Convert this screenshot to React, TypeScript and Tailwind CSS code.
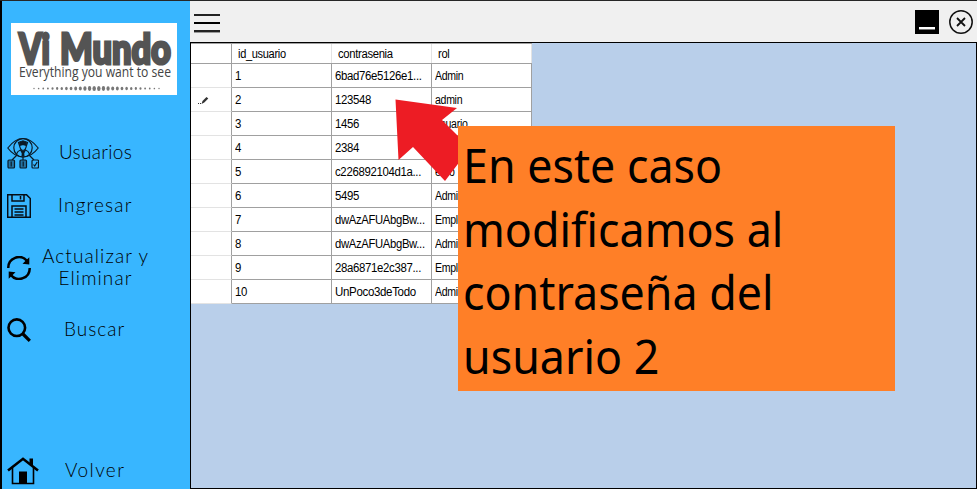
import React from "react";

const rows = [
  { id: "1", pass: "6bad76e5126e1...", rol: "Admin", t: "scale-x-[0.95]" },
  { id: "2", pass: "123548", rol: "admin", t: "scale-x-[0.95]" },
  { id: "3", pass: "1456", rol: "usuario", t: "scale-x-[0.95]" },
  { id: "4", pass: "2384", rol: "Admin", t: "scale-x-[0.95]" },
  { id: "5", pass: "c226892104d1a...", rol: "emo", t: "scale-x-[0.95]" },
  { id: "6", pass: "5495", rol: "Admin", t: "scale-x-[0.95]" },
  { id: "7", pass: "dwAzAFUAbgBw...", rol: "Empleado", t: "scale-x-[0.94]" },
  { id: "8", pass: "dwAzAFUAbgBw...", rol: "Admin", t: "scale-x-[0.94]" },
  { id: "9", pass: "28a6871e2c387...", rol: "Empleado", t: "scale-x-[0.95]" },
  { id: "10", pass: "UnPoco3deTodo", rol: "Admin", t: "scale-x-[0.96]" },
];

function Logo() {
  const dots = Array.from({ length: 28 }, (_, i) => i);
  return (
    <svg width="166" height="72" viewBox="0 0 166 72" className="block bg-white">
      <g fill="#545454" stroke="#545454" strokeWidth="3" className="font-[Lato] font-black">
        <text x="8" y="41" fontSize="42" textLength="31" lengthAdjust="spacingAndGlyphs">Vi</text>
        <text x="49" y="41" fontSize="42" textLength="111" lengthAdjust="spacingAndGlyphs">Mundo</text>
      </g>
      <text x="8" y="54" fontSize="14" fill="#444" stroke="#fff" strokeWidth="0.8" paintOrder="stroke" fontFamily="'Open Sans', sans-serif" textLength="152" lengthAdjust="spacingAndGlyphs">Everything you want to see</text>
      {dots.map((i) => (
        <ellipse key={i} cx={23 + i * 4.63} cy="65.5" rx={0.7 + 1.1 * (1 - Math.abs(i - 13.5) / 13.5)} ry={0.7 + 1.9 * (1 - Math.abs(i - 13.5) / 13.5)} fill="#777" />
      ))}
    </svg>
  );
}

function UsersIcon() {
  return (
    <svg width="32" height="32" viewBox="0 0 32 32" fill="none" stroke="#0a1a26" strokeWidth="1.2">
      <path d="M.8 11Q8 1.500 16 1.500T31.200 11Q25 19.500 16 20 7 19.500.8 11Z" />
      <circle cx="16" cy="10.800" r="9.200" />
      <path d="M11.500 5.500q4.500-3 9 0l-1 3-3.500-1-3.500 1zM12.500 8q.5 5 3.500 5.500 3-.5 3.500-5.500M9.500 17q1-3 4-4l2.500 4 2.500-4q3 1 4 4M16 14v9M10 18l-5 5M22 18l5 5" />
      <path d="M12 5.500l4-2 4 2-.5 2.500h-7zM15 14h2l.5 5h-3z" fill="#0a1a26" stroke="none" />
      <g fill="#2373a3">
        <rect x="1" y="23" width="6.500" height="8" rx="1" />
        <rect x="13" y="23" width="6.500" height="8" rx="1" />
      </g>
      <rect x="25" y="23" width="6.500" height="8" rx="1" />
      <path d="M4.200 24.500v5M16.200 24.500v5M26.500 27.500l1.200 1.500 2.500-4" />
    </svg>
  );
}

function SaveIcon() {
  return (
    <svg width="24" height="24" viewBox="0 0 24 24" fill="none" stroke="#050d14" strokeWidth="1.5">
      <path d="M.7.7h18.800l3.800 3.800v18.800H.7zM5 1v6h12V1M13.500 2v3.500M5 23V12h14v11M7.500 15h9M7.500 18h9M7.500 21h9" />
    </svg>
  );
}

function SyncIcon() {
  return (
    <svg width="24" height="24" viewBox="0 0 24 24" fill="none" stroke="#000" strokeWidth="2.500">
      <path d="M1.300 12A10.600 10.600 0 0 1 20 4.900M22.700 12A10.600 10.600 0 0 1 4 19.100" />
      <path d="M22.300 1.300v7.300l-6.800-.8zM1.700 22.700v-7.300l6.800.8z" fill="#000" stroke="none" />
    </svg>
  );
}

function SearchIcon() {
  return (
    <svg width="24" height="24" viewBox="0 0 24 24" fill="none" stroke="#000">
      <circle cx="9.800" cy="9.700" r="8.300" strokeWidth="2.600" />
      <path d="M16 16l6.800 6.800" strokeWidth="3.200" />
    </svg>
  );
}

function HomeIcon() {
  return (
    <svg width="32" height="28" viewBox="0 0 32 28" fill="none" stroke="#000">
      <path d="M1 13.500L16 1.800l15 11.700" strokeWidth="2.600" />
      <path d="M5.500 11v15.500h21V11" strokeWidth="1.600" />
      <path d="M22.500 1.500H26v8l-3.500-3zM12 14.500h8V26h-8z" fill="#000" stroke="none" />
    </svg>
  );
}

function NavItem({ icon, label, className, labelClass }: { icon: React.ReactNode; label: React.ReactNode; className: string; labelClass: string }) {
  return (
    <button className={`flex w-full items-center text-left ${className}`}>
      <span className="w-8 shrink-0">{icon}</span>
      <span className={`whitespace-nowrap pb-[2px] text-center font-[Lato] text-[19px] font-light leading-[22px] text-black ${labelClass}`}>{label}</span>
    </button>
  );
}

function Fit({ className, children }: { className: string; children: React.ReactNode }) {
  return <span className={`block w-max origin-left tracking-[-0.35px] ${className}`}>{children}</span>;
}

export default function App() {
  return (
    <div className="relative flex h-[489px] w-[977px] overflow-hidden border-t border-[#262626] bg-[#f0f0f0] font-['Liberation_Sans',sans-serif]">
      <aside className="flex w-[190px] shrink-0 flex-col border-l-2 border-black bg-[#38b6ff] pt-[22px]">
        <div className="ml-[9px]"><Logo /></div>
        <nav className="flex grow flex-col pl-[5px]">
          <NavItem className="mt-[42px] h-8" icon={<UsersIcon />} label="Usuarios" labelClass="ml-[20px] tracking-[0.3px]" />
          <NavItem className="mt-[25px] h-6" icon={<SaveIcon />} label="Ingresar" labelClass="ml-[19px] tracking-[1.2px]" />
          <NavItem className="mt-[28px] h-[44px]" icon={<SyncIcon />} label={<>Actualizar y<br />Eliminar</>} labelClass="ml-[3px] tracking-[1.1px]" />
          <NavItem className="mt-[28px] h-6" icon={<SearchIcon />} label="Buscar" labelClass="ml-[25px] tracking-[1px]" />
          <NavItem className="mb-[4px] mt-auto h-7" icon={<HomeIcon />} label="Volver" labelClass="ml-[26px] tracking-[1.4px]" />
        </nav>
      </aside>
      <div className="flex grow flex-col">
        <header className="flex h-[41px] shrink-0 items-center pr-[4px]">
          <div className="ml-1 mt-[4px] flex w-[26px] flex-col gap-[6px]">
            <i className="h-[2px] bg-[#222]" />
            <i className="h-[2px] bg-black" />
            <i className="h-[3px] border-b border-[#999] bg-[#222]" />
          </div>
          <div className="ml-auto flex h-6 w-6 items-end bg-black px-1 pb-1">
            <i className="h-[3px] w-4 border-b border-[#777] bg-white" />
          </div>
          <svg className="ml-[10px]" width="24" height="24" viewBox="0 0 24 24" fill="none" stroke="#111" strokeWidth="1.500">
            <circle cx="12" cy="12" r="11.200" />
            <path d="M8 8l8 8M16 8l-8 8" strokeWidth="1.800" />
          </svg>
        </header>
        <main className="grow border border-black bg-[#b9cfea]">
          <div className="w-[341px] border-t border-[#a0a0a0] bg-white text-[12px] leading-[14px] text-black">
            <div className="flex h-[20px] border-b border-[#a0a0a0]">
              <div className="w-[41px] border-r border-[#a0a0a0]" />
              <div className="w-[100px] border-r border-[#e3e3e3] pl-[6px] pt-[3px]"><Fit className="scale-x-[0.92]">id_usuario</Fit></div>
              <div className="w-[100px] border-r border-[#e3e3e3] pl-[6px] pt-[3px]"><Fit className="scale-x-[0.94]">contrasenia</Fit></div>
              <div className="w-[100px] border-r border-[#e3e3e3] pl-[6px] pt-[3px]"><Fit className="scale-x-[0.93]">rol</Fit></div>
            </div>
            {rows.map((r) => (
              <div key={r.id} className="flex h-6">
                <div className="flex w-[41px] items-center border-b border-r border-b-[#e3e3e3] border-r-[#a0a0a0] pl-[6px]">
                  {r.id === "2" && (
                    <svg width="12" height="10" viewBox="0 0 12 10">
                      <path d="M1 8h1v1H1zM3 8h1v1H3zM4.500 9l1-3 4-4 1.800 1.500-4 4z" fill="#333" />
                    </svg>
                  )}
                </div>
                <div className="w-[100px] border-b border-r border-[#a0a0a0] pl-[3px] pt-[5px]"><Fit className="scale-x-[0.95]">{r.id}</Fit></div>
                <div className="w-[100px] border-b border-r border-[#a0a0a0] pl-[3px] pt-[5px]"><Fit className={r.t}>{r.pass}</Fit></div>
                <div className="w-[100px] border-b border-r border-[#a0a0a0] pl-[3px] pt-[5px]"><Fit className="scale-x-[0.88]">{r.rol}</Fit></div>
              </div>
            ))}
          </div>
        </main>
      </div>
      <svg className="absolute left-[390px] top-[94px]" width="80" height="92" viewBox="0 0 80 92">
        <path d="M5.500 4.500L67 13 52 25 80 53 55 86 23 52 8.500 65z" fill="#ed1c24" />
      </svg>
      <div className="absolute left-[458px] top-[125px] h-[265px] w-[437px] bg-[#ff7f27] pl-[5px] pt-[7px]">
        <div className="w-max origin-left scale-x-[0.933] font-['Noto_Sans'] text-[48px] leading-[63.7px] text-black">
          <p>En este caso</p>
          <p>modificamos al</p>
          <p>contraseña del</p>
          <p>usuario 2</p>
        </div>
      </div>
    </div>
  );
}
